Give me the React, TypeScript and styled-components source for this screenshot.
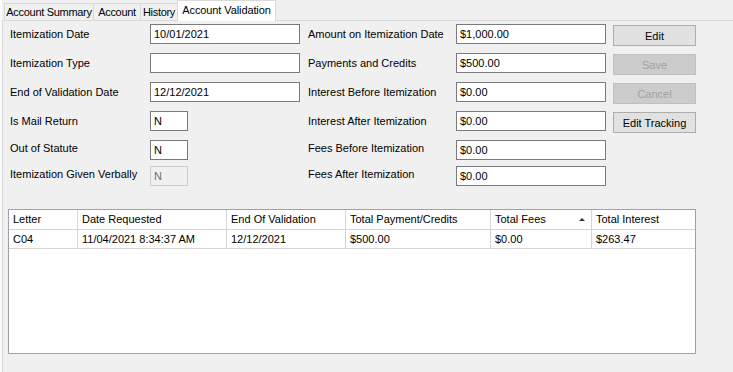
import React from "react";
import styled, { createGlobalStyle, css } from "styled-components";

const GlobalStyle = createGlobalStyle`
  html, body { margin: 0; padding: 0; background: #f0f0f0; }
  body {
    font-family: "Liberation Sans", Arial, sans-serif;
    font-size: 11px;
    color: #000;
  }
`;

const Window = styled.div`
  width: 733px;
  height: 372px;
  overflow: hidden;
  background: #f0f0f0;
  box-sizing: border-box;
  border-left: 2px solid #fafafa;
`;

const TabStrip = styled.div`
  display: flex;
  align-items: flex-end;
  height: 20px;
  padding-left: 2px;
  position: relative;
  z-index: 1;
`;

const Tab = styled.div<{ $w: number; $active?: boolean }>`
  box-sizing: border-box;
  width: ${(p) => p.$w}px;
  height: 17px;
  margin-right: -1px;
  border: 1px solid #d9d9d9;
  border-bottom: none;
  background: #f0f0f0;
  display: flex;
  align-items: center;
  justify-content: center;
  letter-spacing: -0.3px;
  white-space: nowrap;
  ${(p) =>
    p.$active &&
    css`
      height: 21px;
      margin-bottom: -1px;
      background: #ffffff;
      padding-bottom: 2px;
      letter-spacing: -0.1px;
    `}
`;

const Panel = styled.div`
  border-top: 1px solid #d9d9d9;
  border-left: 1px solid #d9d9d9;
  height: 352px;
  box-sizing: border-box;
  padding: 3px 0 0 7px;
`;

const Form = styled.div`
  display: flex;
  flex-direction: column;
`;

const Row = styled.div<{ $gap: number }>`
  display: flex;
  align-items: flex-start;
  height: 20px;
  margin-top: ${(p) => p.$gap}px;
`;

const Label = styled.div<{ $w: number; $ml?: number; $lift?: boolean }>`
  width: ${(p) => p.$w}px;
  margin-left: ${(p) => p.$ml ?? 0}px;
  line-height: 20px;
  white-space: nowrap;
  ${(p) => p.$lift && css`margin-top: -2px;`}
`;

const FieldCell = styled.div`
  width: 150px;
`;

const TextBox = styled.div<{ $small?: boolean; $disabled?: boolean }>`
  box-sizing: border-box;
  width: ${(p) => (p.$small ? 38 : 150)}px;
  height: 20px;
  border: 1px solid #7a7a7a;
  background: #ffffff;
  padding: 1px 0 0 3px;
  line-height: 17px;
  white-space: nowrap;
  ${(p) =>
    p.$disabled &&
    css`
      background: #f0f0f0;
      border-color: #cccccc;
      color: #6d6d6d;
    `}
`;

const Button = styled.div<{ $disabled?: boolean }>`
  box-sizing: border-box;
  width: 83px;
  height: 21px;
  margin: 1px 0 0 7px;
  border: 1px solid #adadad;
  background: #e1e1e1;
  display: flex;
  align-items: center;
  justify-content: center;
  ${(p) =>
    p.$disabled &&
    css`
      background: #cccccc;
      border-color: #bfbfbf;
      color: #a0a0a0;
    `}
`;

const GridBox = styled.div`
  box-sizing: border-box;
  width: 688px;
  height: 145px;
  margin: 23px 0 0 -2px;
  border: 1px solid #a0a0ab;
  background: #ffffff;
`;

const GridRow = styled.div<{ $header?: boolean }>`
  display: flex;
  box-sizing: border-box;
  height: ${(p) => (p.$header ? 20 : 19)}px;
  border-bottom: 1px solid #d5d5d5;
`;

const Cell = styled.div<{ $w?: number; $last?: boolean }>`
  position: relative;
  box-sizing: border-box;
  ${(p) => (p.$w ? css`width: ${p.$w}px;` : css`flex: 1;`)}
  border-right: ${(p) => (p.$last ? "none" : "1px solid #d5d5d5")};
  padding-left: 4px;
  line-height: 18px;
  white-space: nowrap;
  overflow: hidden;
`;

const SortArrow = styled.span`
  position: absolute;
  right: 6px;
  top: 8px;
  width: 0;
  height: 0;
  border-left: 3px solid transparent;
  border-right: 3px solid transparent;
  border-bottom: 3px solid #333;
`;

const columns = [
  { title: "Letter", w: 69 },
  { title: "Date Requested", w: 149 },
  { title: "End Of Validation", w: 119 },
  { title: "Total Payment/Credits", w: 145 },
  { title: "Total Fees", w: 101, sort: true },
  { title: "Total Interest" },
];

const rows = [["C04", "11/04/2021 8:34:37 AM", "12/12/2021", "$500.00", "$0.00", "$263.47"]];

type FormRow = {
  gap: number;
  left: string;
  leftValue: string;
  small?: boolean;
  disabled?: boolean;
  lift?: boolean;
  right: string;
  rightValue: string;
  button?: { text: string; disabled?: boolean };
};

const formRows: FormRow[] = [
  { gap: 0, left: "Itemization Date", leftValue: "10/01/2021", right: "Amount on Itemization Date", rightValue: "$1,000.00", button: { text: "Edit" } },
  { gap: 9, left: "Itemization Type", leftValue: "", right: "Payments and Credits", rightValue: "$500.00", button: { text: "Save", disabled: true } },
  { gap: 9, left: "End of Validation Date", leftValue: "12/12/2021", right: "Interest Before Itemization", rightValue: "$0.00", button: { text: "Cancel", disabled: true } },
  { gap: 9, left: "Is Mail Return", leftValue: "N", small: true, right: "Interest After Itemization", rightValue: "$0.00", button: { text: "Edit Tracking" } },
  { gap: 9, left: "Out of Statute", leftValue: "N", small: true, lift: true, right: "Fees Before Itemization", rightValue: "$0.00" },
  { gap: 6, left: "Itemization Given Verbally", leftValue: "N", small: true, disabled: true, lift: true, right: "Fees After Itemization", rightValue: "$0.00" },
];

export default function App() {
  return (
    <>
      <GlobalStyle />
      <Window>
        <TabStrip>
          <Tab $w={90}>Account Summary</Tab>
          <Tab $w={48}>Account</Tab>
          <Tab $w={38}>History</Tab>
          <Tab $w={99} $active>
            Account Validation
          </Tab>
        </TabStrip>
        <Panel>
          <Form>
            {formRows.map((r) => (
              <Row key={r.left} $gap={r.gap}>
                <Label $w={140} $lift={r.lift}>
                  {r.left}
                </Label>
                <FieldCell>
                  <TextBox $small={r.small} $disabled={r.disabled}>
                    {r.leftValue}
                  </TextBox>
                </FieldCell>
                <Label $w={148} $ml={8} $lift={r.lift}>
                  {r.right}
                </Label>
                <TextBox>{r.rightValue}</TextBox>
                {r.button && <Button $disabled={r.button.disabled}>{r.button.text}</Button>}
              </Row>
            ))}
          </Form>
          <GridBox>
            <GridRow $header>
              {columns.map((c, i) => (
                <Cell key={c.title} $w={c.w} $last={i === columns.length - 1}>
                  {c.title}
                  {c.sort && <SortArrow />}
                </Cell>
              ))}
            </GridRow>
            {rows.map((r) => (
              <GridRow key={r[0]}>
                {r.map((v, i) => (
                  <Cell key={i} $w={columns[i].w} $last={i === r.length - 1}>
                    {v}
                  </Cell>
                ))}
              </GridRow>
            ))}
          </GridBox>
        </Panel>
      </Window>
    </>
  );
}
